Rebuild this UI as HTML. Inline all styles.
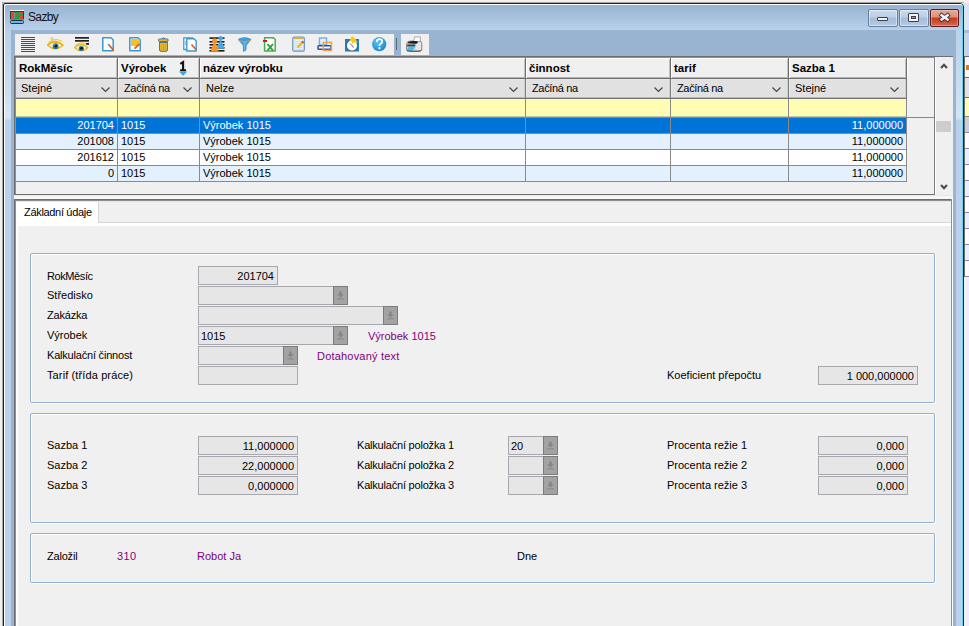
<!DOCTYPE html>
<html><head><meta charset="utf-8"><title>Sazby</title>
<style>
*{box-sizing:border-box;margin:0;padding:0}
html,body{width:969px;height:626px;overflow:hidden}
body{background:#f0f0f0;position:relative;font-family:"Liberation Sans",sans-serif;font-size:11px;color:#000}
.a{position:absolute}
.t{position:absolute;white-space:nowrap;line-height:13px;font-size:11px}
.b{font-weight:bold}
.r{text-align:right}
.p{color:#800080}
svg{position:absolute;overflow:visible}
</style></head><body>

<div class="a" style="left:2px;top:2px;width:962px;height:700px;border:1px solid #a8a8a8;border-right:none"></div>
<div class="a" style="left:3px;top:3px;width:961px;height:700px;border:1px solid #1e1e1e;border-radius:2px 4px 0 0;background:#b9d1ea"></div>
<div class="a" style="left:4px;top:4px;width:959px;height:700px;border-top:1px solid #fff;border-left:1px solid #fff;border-radius:3px 3px 0 0;border-right:1px solid #5fd4f5"></div>
<div class="a" style="left:5px;top:5px;width:957px;height:25px;background:linear-gradient(#98b3d0,#b9d1ea);border-radius:2px 2px 0 0"></div>
<div class="a" style="left:5px;top:30px;width:6px;height:91px;background:linear-gradient(#b9d1ea 0%,#c9dbee 55%,#d7e5f3 96%,#bad2ea 100%)"></div>
<div class="a" style="left:956px;top:30px;width:6px;height:91px;background:linear-gradient(#b9d1ea 0%,#c9dbee 55%,#d7e5f3 96%,#bad2ea 100%)"></div>
<div class="a" style="left:11px;top:30px;width:945px;height:700px;background:#99b4d1"></div>
<svg style="left:10px;top:10px" width="14" height="14" viewBox="0 0 14 14">
<rect x="0" y="0" width="14" height="1" fill="#f4f4f4"/>
<rect x="0.5" y="1.5" width="13" height="8" fill="#1ea050" stroke="#303a40"/>
<rect x="1" y="2" width="3" height="7" fill="#e04a26"/>
<rect x="4" y="3" width="1" height="5" fill="#8090a8"/>
<rect x="10" y="2" width="3" height="2" fill="#e04a26"/>
<rect x="10" y="6" width="3" height="3" fill="#e04a26"/>
<rect x="5" y="4" width="2" height="2" fill="#e04a26"/>
<rect x="0" y="9.5" width="14" height="1" fill="#c8d0d8"/>
<rect x="0.5" y="10.5" width="13" height="3" rx="1" fill="#62b8f4" stroke="#203040"/>
</svg>
<div class="t" style="left:28px;top:10px;font-size:12px;letter-spacing:-0.65px;color:#101018;line-height:15px">Sazby</div>
<div class="a" style="left:868px;top:9px;width:30px;height:18px;background:linear-gradient(#c9daee 0%,#b9cfe8 45%,#a3bcd9 50%,#b3cae4 100%);border:1px solid #6a7f9c;border-radius:2px;box-shadow:inset 0 0 0 1px rgba(255,255,255,0.45)"></div>
<div class="a" style="left:899px;top:9px;width:30px;height:18px;background:linear-gradient(#c9daee 0%,#b9cfe8 45%,#a3bcd9 50%,#b3cae4 100%);border:1px solid #6a7f9c;border-radius:2px;box-shadow:inset 0 0 0 1px rgba(255,255,255,0.45)"></div>
<div class="a" style="left:930px;top:9px;width:29px;height:18px;background:linear-gradient(#eba896 0%,#de9078 44%,#c23c1c 50%,#d26a50 100%);border:1px solid #5a1c1c;border-radius:2px;box-shadow:inset 0 0 0 1px rgba(255,200,190,0.45)"></div>
<div class="a" style="left:877px;top:17px;width:11px;height:4px;background:#f4f4f4;border:1px solid #3c3c4c;border-radius:1px"></div>
<div class="a" style="left:908px;top:13px;width:11px;height:9px;background:#f4f4f4;border:1px solid #3c3c4c;border-radius:1px"></div>
<div class="a" style="left:911px;top:16px;width:5px;height:3px;background:#8fa6c6;border:1px solid #3c3c4c"></div>
<svg style="left:937px;top:11px" width="15" height="13" viewBox="0 0 15 13">
<path d="M4.6 4.2 L10.6 8.6 M10.6 4.2 L4.6 8.6" stroke="#3a3040" stroke-width="4.2" stroke-linecap="square"/>
<path d="M4.6 4.2 L10.6 8.6 M10.6 4.2 L4.6 8.6" stroke="#f4f4f4" stroke-width="2.5" stroke-linecap="square"/>
</svg>
<div class="a" style="left:15px;top:34px;width:379px;height:21px;background:#f0f0f0"></div>
<div class="a" style="left:396px;top:38px;width:1px;height:12px;background:#5a6a7a"></div>
<div class="a" style="left:401px;top:34px;width:28px;height:21px;background:#f0f0f0"></div>
<svg style="left:0;top:0" width="440" height="60" viewBox="0 0 440 60">
<defs>
<linearGradient id="gfun" x1="0" y1="0" x2="1" y2="0"><stop offset="0" stop-color="#2a7cc4"/><stop offset="0.5" stop-color="#5ab8ee"/><stop offset="1" stop-color="#2a7cc4"/></linearGradient>
<radialGradient id="ghelp" cx="0.4" cy="0.35" r="0.7"><stop offset="0" stop-color="#5cc4f2"/><stop offset="1" stop-color="#1a86cc"/></radialGradient>
</defs>
<!-- 1 lines -->
<g fill="#4c4c4c">
<rect x="21" y="37" width="14" height="1"/><rect x="21" y="39" width="14" height="1"/><rect x="21" y="41" width="14" height="1"/><rect x="21" y="43" width="14" height="1"/>
<rect x="21" y="45" width="14" height="1"/><rect x="21" y="47" width="14" height="1"/><rect x="21" y="49" width="14" height="1"/><rect x="21" y="51" width="14" height="1"/>
</g>
<!-- 2 eye -->
<g fill="none" stroke-linecap="round">
<path d="M47.8 45.5 Q55 48.5 63 46" stroke="#f8f4e0" stroke-width="2.5"/>
<path d="M47.8 44.8 Q55 38.5 62.8 45.2" stroke="#e6b414" stroke-width="1.7"/>
<path d="M48.5 42.5 Q55 37.2 61.5 41" stroke="#ecc030" stroke-width="0.9"/>
<path d="M48 45.5 Q55 52 62.8 45.5" stroke="#e6b414" stroke-width="1.3"/>
<path d="M51.5 40 L51 37.8 M52.8 39.4 L52.8 37.5" stroke="#d8a818" stroke-width="0.6"/>
</g>
<circle cx="55.6" cy="46.2" r="2.9" fill="#26789c"/>
<circle cx="55.8" cy="46" r="1.3" fill="#050505"/>
<circle cx="54.8" cy="45" r="0.5" fill="#fff"/>
<!-- 3 eye with lines -->
<rect x="75" y="37" width="14" height="1.7" fill="#202020"/>
<rect x="75" y="40" width="14" height="1.7" fill="#202020"/>
<rect x="86" y="43" width="3" height="1.8" fill="#202020"/>
<g fill="none" stroke-linecap="round">
<path d="M75 48 Q81 50.5 87.5 48.3" stroke="#f8f4e0" stroke-width="2.2"/>
<path d="M74.8 47.5 Q81 41.5 87.5 47.5" stroke="#e6b414" stroke-width="1.6"/>
<path d="M75.5 45.2 Q81 41 86 44" stroke="#ecc030" stroke-width="0.9"/>
<path d="M75 48 Q81 53.5 87.5 48" stroke="#e6b414" stroke-width="1.2"/>
</g>
<circle cx="81.3" cy="48.5" r="2.6" fill="#26789c"/>
<circle cx="81.5" cy="48.3" r="1.2" fill="#050505"/>
<!-- 4 doc with pen -->
<path d="M102.8 37.8 H111 L113.2 40 V50.8 H102.8 Z" fill="#fff" stroke="#3d97d6" stroke-width="1.5" stroke-linejoin="round"/>
<path d="M108.5 44.5 L113.5 50.2" stroke="#e25a1c" stroke-width="1.8"/>
<path d="M108 44 L108.8 44.8" stroke="#888" stroke-width="1.2"/>
<!-- 5 doc yellow with pen -->
<path d="M129.8 37.8 H138 L140.2 40 V50.8 H129.8 Z" fill="#fff" stroke="#3d97d6" stroke-width="1.5" stroke-linejoin="round"/>
<path d="M131 39 H137.5 L139 40.5 V46 H131 Z" fill="#f8c21c"/>
<path d="M139.6 43.8 L134.5 48.6" stroke="#e25a1c" stroke-width="1.8"/>
<!-- 6 trash -->
<path d="M161.6 39.2 Q163.5 36.2 165.4 39.2" fill="#f2c01e" stroke="#4a6a98" stroke-width="0.8"/>
<rect x="158.4" y="38.9" width="9.8" height="2.5" rx="1.2" fill="#f2c01e" stroke="#4a6a98" stroke-width="0.9"/>
<rect x="159" y="41.4" width="8.8" height="1.3" fill="#4a6a98"/>
<path d="M159.6 42.6 H167.4 V50 Q167.4 51.3 166 51.3 H161 Q159.6 51.3 159.6 50 Z" fill="#f2c01e" stroke="#4a6a98" stroke-width="1"/>
<path d="M161.9 44 V50 M163.5 44 V50 M165.1 44 V50" stroke="#c89a14" stroke-width="0.8"/>
<!-- 7 two docs -->
<path d="M183.8 37.8 H192.5 V49.5 H183.8 Z" fill="#fff" stroke="#3d97d6" stroke-width="1.3"/>
<rect x="185" y="41" width="1" height="4" fill="#f5c020"/>
<path d="M186.8 38.8 H194 L196.2 41 V51 H186.8 Z" fill="#fff" stroke="#3d97d6" stroke-width="1.4" stroke-linejoin="round"/>
<path d="M191.5 44.5 L196.2 49.8" stroke="#e25a1c" stroke-width="1.7"/>
<!-- 8 lines with pawns -->
<g fill="#1a1a1a">
<rect x="209.5" y="37.3" width="15" height="1.6"/><rect x="209.5" y="41" width="15" height="1.6"/><rect x="209.5" y="44" width="15" height="1.6"/>
<rect x="209.5" y="47" width="15" height="1.6"/><rect x="209.5" y="50" width="15" height="1.6"/>
</g>
<path d="M217 48.5 C217 44 220 43 219.8 40.5 A2.3 2.3 0 1 1 221.5 40.5 C221.5 43 224 44 224 48.5 Z" fill="#4aa8e0"/>
<path d="M211 51.5 C211 46.5 213.5 45.5 213.3 43 A2.5 2.5 0 1 1 216 43 C216 45.5 218.5 46.5 218.5 51.5 Z" fill="#f7942a"/>
<!-- 9 funnel -->
<path d="M238.5 39.5 Q244.5 36 250.8 39.5 L246.2 45.5 L246 50 L243.5 51.5 L243.3 45.5 Z" fill="url(#gfun)" stroke="#2a6aa0" stroke-width="0.6"/>
<ellipse cx="244.6" cy="39.3" rx="6" ry="1.8" fill="#3a9ee0"/>
<path d="M238.6 40.6 Q244.6 43 250.6 40.6" fill="none" stroke="#d8a030" stroke-width="1.1"/>
<!-- 10 excel -->
<path d="M264.6 37.8 H273.5 L275.2 39.5 V51 H264.6 Z" fill="#fff" stroke="#4caa4c" stroke-width="1.5" stroke-linejoin="round"/>
<rect x="263" y="40" width="4" height="2" fill="#d01818"/>
<path d="M267.5 44 L273 50.5 M273 44 L267.5 50.5" stroke="#2a9a3a" stroke-width="1.9"/>
<!-- 11 notepad -->
<rect x="292.8" y="37" width="11.5" height="14.2" rx="1.5" fill="#e4f2fc" stroke="#6a90b8" stroke-width="1.2"/>
<rect x="294" y="37.5" width="9" height="1.6" fill="#c8b040"/>
<path d="M294.5 41.5 H302.5 M294.5 43.5 H302.5 M294.5 45.5 H302.5 M294.5 47.5 H302.5 M294.5 49.5 H302.5" stroke="#c0d8ee" stroke-width="0.7"/>
<path d="M303 41.8 L297.5 47.5" stroke="#f2b818" stroke-width="2.4"/>
<path d="M303.2 41.6 L302.3 42.5" stroke="#b82a2a" stroke-width="2.4"/>
<!-- 12 two windows -->
<rect x="319.5" y="38" width="7" height="7" fill="none" stroke="#66aef0" stroke-width="1.4"/>
<rect x="318" y="45.7" width="13" height="3.6" rx="0.8" fill="#fff" stroke="#2a4aa8" stroke-width="1.5"/>
<rect x="323.3" y="42.4" width="8.2" height="8" fill="none" stroke="#f0a050" stroke-width="1.5"/>
<!-- 13 clock -->
<rect x="345" y="39" width="14" height="12.5" fill="#1d7fc0"/>
<circle cx="352" cy="45.5" r="5.4" fill="#fff" stroke="#222" stroke-width="0.5"/>
<path d="M352 45.5 L350 43.5 M352 45.5 L353.5 47.5" stroke="#333" stroke-width="0.8"/>
<path d="M352 36 L349 41.5 L351.5 41 L352.5 44 L355 42 L358 43 L355.5 39 Z" fill="#f8c81c"/>
<!-- 14 help -->
<circle cx="379.2" cy="44.2" r="7.1" fill="url(#ghelp)"/>
<path d="M376.6 42 Q376.8 39.2 379.4 39.2 Q382.2 39.2 382.2 41.6 Q382.2 43.2 380.4 44 Q379.4 44.5 379.4 46" fill="none" stroke="#fff" stroke-width="1.8"/>
<rect x="378.4" y="47.2" width="2" height="2" fill="#fff"/>
<!-- printer -->
<path d="M406.5 44.5 Q406.5 41.8 409 41.2 L419 40.6 Q421.6 41 421.8 43.5 L421.8 49.5 Q421.6 51.3 419.5 51.3 L408.5 51.3 Q406.5 51.3 406.5 49.5 Z" fill="#d4d4d4" stroke="#707070" stroke-width="0.8"/>
<path d="M416 42 L421 42.5 L421 50.5 L416 50.5 Z" fill="#e6e6e6"/>
<path d="M413.5 41.5 L414.6 36.8 L420.6 37 L420 41.5 Z" fill="#fbfbfb" stroke="#8a8a9a" stroke-width="0.7"/>
<path d="M408 42.3 Q411 40.6 417.6 41.3 Q418.2 42.9 416.6 43.7 Q411 43.9 408 43.3 Z" fill="#1c1c1c"/>
<path d="M407.2 44.6 L415.5 44.6 L415 46.5 L407.2 46.5 Z" fill="#3a3a3a"/>
<path d="M406.9 49.6 L409.3 46.2 L415.2 46.5 L412.6 50.8 Z" fill="#36bdf0"/>
<path d="M407 50.6 L413 51.3 L420 51 L421.5 49.8" fill="none" stroke="#404048" stroke-width="0.9"/>
</svg>
<div class="a" style="left:14px;top:56px;width:939px;height:139px;background:#f0f0f0"></div>
<div class="a" style="left:14px;top:56px;width:939px;height:1px;background:#6e6e6e"></div>
<div class="a" style="left:14px;top:56px;width:1px;height:139px;background:#6e6e6e"></div>
<div class="a" style="left:15px;top:57px;width:920px;height:1px;background:#8e8e8e"></div>
<div class="a" style="left:15px;top:57px;width:1px;height:137px;background:#8e8e8e"></div>
<div class="a" style="left:14px;top:194px;width:921px;height:1px;background:#6e6e6e"></div>
<div class="a" style="left:934px;top:57px;width:1px;height:138px;background:#7a7f86"></div>
<div class="a" style="left:16px;top:58px;width:891px;height:1px;background:#fff"></div>
<div class="a" style="left:16px;top:59px;width:891px;height:18px;background:#f0f0f0"></div>
<div class="a" style="left:16px;top:77px;width:891px;height:1px;background:#b4b4b4"></div>
<div class="a" style="left:16px;top:78px;width:891px;height:1px;background:#6e6e6e"></div>
<div class="a" style="left:16px;top:79px;width:891px;height:18px;background:#e1e1e1"></div>
<div class="a" style="left:16px;top:79px;width:891px;height:1px;background:#e8e8e8"></div>
<div class="a" style="left:16px;top:97px;width:891px;height:1px;background:#b8b8b8"></div>
<div class="a" style="left:16px;top:98px;width:891px;height:1px;background:#747474"></div>
<div class="a" style="left:16px;top:99px;width:891px;height:18px;background:#fffdb4"></div>
<div class="a" style="left:16px;top:116px;width:891px;height:1px;background:#c8c6a0"></div>
<div class="a" style="left:16px;top:117px;width:918px;height:1px;background:#888888"></div>
<div class="a" style="left:16px;top:118px;width:891px;height:15px;background:#0074d6"></div>
<div class="a" style="left:16px;top:133px;width:891px;height:1px;background:#8a8a8a"></div>
<div class="a" style="left:16px;top:134px;width:891px;height:15px;background:#e2f1fd"></div>
<div class="a" style="left:16px;top:149px;width:891px;height:1px;background:#8a8a8a"></div>
<div class="a" style="left:16px;top:150px;width:891px;height:15px;background:#ffffff"></div>
<div class="a" style="left:16px;top:165px;width:891px;height:1px;background:#8a8a8a"></div>
<div class="a" style="left:16px;top:166px;width:891px;height:15px;background:#e2f1fd"></div>
<div class="a" style="left:16px;top:181px;width:891px;height:1px;background:#8a8a8a"></div>
<div class="a" style="left:116px;top:59px;width:1px;height:18px;background:#c2c2c2"></div>
<div class="a" style="left:117px;top:58px;width:1px;height:20px;background:#6e6e6e"></div>
<div class="a" style="left:118px;top:58px;width:1px;height:20px;background:#fff"></div>
<div class="a" style="left:116px;top:79px;width:1px;height:18px;background:#d0d0d0"></div>
<div class="a" style="left:117px;top:79px;width:1px;height:19px;background:#7a7a7a"></div>
<div class="a" style="left:118px;top:79px;width:1px;height:18px;background:#ebebeb"></div>
<div class="a" style="left:117px;top:99px;width:1px;height:83px;background:#8a8a8a"></div>
<div class="a" style="left:198px;top:59px;width:1px;height:18px;background:#c2c2c2"></div>
<div class="a" style="left:199px;top:58px;width:1px;height:20px;background:#6e6e6e"></div>
<div class="a" style="left:200px;top:58px;width:1px;height:20px;background:#fff"></div>
<div class="a" style="left:198px;top:79px;width:1px;height:18px;background:#d0d0d0"></div>
<div class="a" style="left:199px;top:79px;width:1px;height:19px;background:#7a7a7a"></div>
<div class="a" style="left:200px;top:79px;width:1px;height:18px;background:#ebebeb"></div>
<div class="a" style="left:199px;top:99px;width:1px;height:83px;background:#8a8a8a"></div>
<div class="a" style="left:524px;top:59px;width:1px;height:18px;background:#c2c2c2"></div>
<div class="a" style="left:525px;top:58px;width:1px;height:20px;background:#6e6e6e"></div>
<div class="a" style="left:526px;top:58px;width:1px;height:20px;background:#fff"></div>
<div class="a" style="left:524px;top:79px;width:1px;height:18px;background:#d0d0d0"></div>
<div class="a" style="left:525px;top:79px;width:1px;height:19px;background:#7a7a7a"></div>
<div class="a" style="left:526px;top:79px;width:1px;height:18px;background:#ebebeb"></div>
<div class="a" style="left:525px;top:99px;width:1px;height:83px;background:#8a8a8a"></div>
<div class="a" style="left:669px;top:59px;width:1px;height:18px;background:#c2c2c2"></div>
<div class="a" style="left:670px;top:58px;width:1px;height:20px;background:#6e6e6e"></div>
<div class="a" style="left:671px;top:58px;width:1px;height:20px;background:#fff"></div>
<div class="a" style="left:669px;top:79px;width:1px;height:18px;background:#d0d0d0"></div>
<div class="a" style="left:670px;top:79px;width:1px;height:19px;background:#7a7a7a"></div>
<div class="a" style="left:671px;top:79px;width:1px;height:18px;background:#ebebeb"></div>
<div class="a" style="left:670px;top:99px;width:1px;height:83px;background:#8a8a8a"></div>
<div class="a" style="left:787px;top:59px;width:1px;height:18px;background:#c2c2c2"></div>
<div class="a" style="left:788px;top:58px;width:1px;height:20px;background:#6e6e6e"></div>
<div class="a" style="left:789px;top:58px;width:1px;height:20px;background:#fff"></div>
<div class="a" style="left:787px;top:79px;width:1px;height:18px;background:#d0d0d0"></div>
<div class="a" style="left:788px;top:79px;width:1px;height:19px;background:#7a7a7a"></div>
<div class="a" style="left:789px;top:79px;width:1px;height:18px;background:#ebebeb"></div>
<div class="a" style="left:788px;top:99px;width:1px;height:83px;background:#8a8a8a"></div>
<div class="a" style="left:905px;top:59px;width:1px;height:18px;background:#c2c2c2"></div>
<div class="a" style="left:906px;top:58px;width:1px;height:20px;background:#6e6e6e"></div>
<div class="a" style="left:907px;top:58px;width:1px;height:20px;background:#fff"></div>
<div class="a" style="left:905px;top:79px;width:1px;height:18px;background:#d0d0d0"></div>
<div class="a" style="left:906px;top:79px;width:1px;height:19px;background:#7a7a7a"></div>
<div class="a" style="left:907px;top:79px;width:1px;height:18px;background:#ebebeb"></div>
<div class="a" style="left:906px;top:99px;width:1px;height:83px;background:#8a8a8a"></div>
<div class="t" style="left:19px;top:62px;font-weight:bold;font-size:11.5px">RokMěsíc</div>
<div class="t" style="left:121px;top:62px;font-weight:bold;font-size:11.5px">Výrobek</div>
<div class="t" style="left:203px;top:62px;font-weight:bold;font-size:11.5px">název výrobku</div>
<div class="t" style="left:529px;top:62px;font-weight:bold;font-size:11.5px">činnost</div>
<div class="t" style="left:674px;top:62px;font-weight:bold;font-size:11.5px">tarif</div>
<div class="t" style="left:792px;top:62px;font-weight:bold;font-size:11.5px">Sazba 1</div>
<svg style="left:178px;top:61px" width="10" height="17" viewBox="0 0 10 17">
<path d="M2.3 2.9 L5.1 1.2 L5.1 9.2 M2.2 9.2 L8 9.2" stroke="#111" stroke-width="2.1" fill="none"/>
<path d="M0.8 10.6 L9.4 10.6 L5.1 14.8 Z" fill="#34a8e8"/>
</svg>
<div class="t" style="left:21px;top:82px;letter-spacing:0px">Stejné</div>
<svg style="left:101px;top:87px" width="9" height="6" viewBox="0 0 9 6"><path d="M0.5 0.5 L4.5 4.5 L8.5 0.5" stroke="#444" stroke-width="1.2" fill="none"/></svg>
<div class="t" style="left:124px;top:82px;letter-spacing:-0.35px">Začíná na</div>
<svg style="left:183px;top:87px" width="9" height="6" viewBox="0 0 9 6"><path d="M0.5 0.5 L4.5 4.5 L8.5 0.5" stroke="#444" stroke-width="1.2" fill="none"/></svg>
<div class="t" style="left:206px;top:82px;letter-spacing:0px">Nelze</div>
<svg style="left:509px;top:87px" width="9" height="6" viewBox="0 0 9 6"><path d="M0.5 0.5 L4.5 4.5 L8.5 0.5" stroke="#444" stroke-width="1.2" fill="none"/></svg>
<div class="t" style="left:532px;top:82px;letter-spacing:-0.35px">Začíná na</div>
<svg style="left:654px;top:87px" width="9" height="6" viewBox="0 0 9 6"><path d="M0.5 0.5 L4.5 4.5 L8.5 0.5" stroke="#444" stroke-width="1.2" fill="none"/></svg>
<div class="t" style="left:677px;top:82px;letter-spacing:-0.35px">Začíná na</div>
<svg style="left:772px;top:87px" width="9" height="6" viewBox="0 0 9 6"><path d="M0.5 0.5 L4.5 4.5 L8.5 0.5" stroke="#444" stroke-width="1.2" fill="none"/></svg>
<div class="t" style="left:795px;top:82px;letter-spacing:0px">Stejné</div>
<svg style="left:890px;top:87px" width="9" height="6" viewBox="0 0 9 6"><path d="M0.5 0.5 L4.5 4.5 L8.5 0.5" stroke="#444" stroke-width="1.2" fill="none"/></svg>
<div class="t" style="left:15px;top:119px;width:99px;text-align:right;color:#fff">201704</div>
<div class="t" style="left:121px;top:119px;color:#fff">1015</div>
<div class="t" style="left:203px;top:119px;color:#fff">Výrobek 1015</div>
<div class="t" style="left:789px;top:119px;width:114px;text-align:right;color:#fff">11,000000</div>
<div class="t" style="left:15px;top:135px;width:99px;text-align:right;color:#000">201008</div>
<div class="t" style="left:121px;top:135px;color:#000">1015</div>
<div class="t" style="left:203px;top:135px;color:#000">Výrobek 1015</div>
<div class="t" style="left:789px;top:135px;width:114px;text-align:right;color:#000">11,000000</div>
<div class="t" style="left:15px;top:151px;width:99px;text-align:right;color:#000">201612</div>
<div class="t" style="left:121px;top:151px;color:#000">1015</div>
<div class="t" style="left:203px;top:151px;color:#000">Výrobek 1015</div>
<div class="t" style="left:789px;top:151px;width:114px;text-align:right;color:#000">11,000000</div>
<div class="t" style="left:15px;top:167px;width:99px;text-align:right;color:#000">0</div>
<div class="t" style="left:121px;top:167px;color:#000">1015</div>
<div class="t" style="left:203px;top:167px;color:#000">Výrobek 1015</div>
<div class="t" style="left:789px;top:167px;width:114px;text-align:right;color:#000">11,000000</div>
<div class="a" style="left:935px;top:57px;width:18px;height:137px;background:#f0f0f0;border-left:1px solid #fff"></div>
<div class="a" style="left:936px;top:121px;width:15px;height:11px;background:#cdcdcd"></div>
<svg style="left:939.5px;top:63px" width="8" height="6" viewBox="0 0 8 6"><path d="M1 5 L4 1.8 L7 5" stroke="#4a4a4a" stroke-width="2.1" fill="none"/></svg>
<svg style="left:939.5px;top:184px" width="8" height="6" viewBox="0 0 8 6"><path d="M1 1 L4 4.2 L7 1" stroke="#4a4a4a" stroke-width="2.1" fill="none"/></svg>
<div class="a" style="left:14px;top:195px;width:939px;height:4px;background:#f6f6f6"></div>
<div class="a" style="left:14px;top:195px;width:939px;height:1px;background:#e8e8e8"></div>
<div class="a" style="left:14px;top:199px;width:938px;height:427px;background:#f0f0f0"></div>
<div class="a" style="left:14px;top:199px;width:938px;height:1px;background:#6e6e6e"></div>
<div class="a" style="left:14px;top:199px;width:1px;height:427px;background:#6e6e6e"></div>
<div class="a" style="left:15px;top:200px;width:937px;height:1px;background:#8e8e8e"></div>
<div class="a" style="left:15px;top:200px;width:1px;height:426px;background:#8e8e8e"></div>
<div class="a" style="left:951px;top:199px;width:1px;height:427px;background:#8a8f98"></div>
<div class="a" style="left:952px;top:199px;width:1px;height:427px;background:#fff"></div>
<div class="a" style="left:16px;top:201px;width:935px;height:1px;background:#e6e6e6"></div>
<div class="a" style="left:16px;top:202px;width:82px;height:21px;background:#fff"></div>
<div class="a" style="left:98px;top:202px;width:1px;height:21px;background:#d6d6d6"></div>
<div class="a" style="left:98px;top:222px;width:853px;height:1px;background:#d6d6d6"></div>
<div class="t" style="left:24px;top:206px;letter-spacing:-0.32px">Základní údaje</div>
<div class="a" style="left:16px;top:223px;width:935px;height:3px;background:#fff"></div>
<div class="a" style="left:16px;top:223px;width:2px;height:403px;background:#fff"></div>
<div class="a" style="left:31px;top:254px;width:905px;height:150px;border:1px solid #fff;border-radius:2px"></div>
<div class="a" style="left:30px;top:253px;width:905px;height:150px;border:1px solid #92b0d0;border-radius:2px"></div>
<div class="a" style="left:31px;top:414px;width:905px;height:110px;border:1px solid #fff;border-radius:2px"></div>
<div class="a" style="left:30px;top:413px;width:905px;height:110px;border:1px solid #92b0d0;border-radius:2px"></div>
<div class="a" style="left:31px;top:534px;width:905px;height:50px;border:1px solid #fff;border-radius:2px"></div>
<div class="a" style="left:30px;top:533px;width:905px;height:50px;border:1px solid #92b0d0;border-radius:2px"></div>
<div class="t" style="left:47px;top:270px;letter-spacing:-0.4px;">RokMěsíc</div>
<div class="t" style="left:47px;top:289px;letter-spacing:0px;">Středisko</div>
<div class="t" style="left:47px;top:309px;letter-spacing:-0.2px;">Zakázka</div>
<div class="t" style="left:47px;top:329px;letter-spacing:0px;">Výrobek</div>
<div class="t" style="left:47px;top:349px;letter-spacing:-0.2px;">Kalkulační činnost</div>
<div class="t" style="left:47px;top:369px;letter-spacing:0.12px;">Tarif (třída práce)</div>
<div class="a" style="left:198px;top:266px;width:80px;height:19px;background:#e6e6e6;border:1px solid #a7a7ad"></div>
<div class="t" style="left:198px;top:270px;width:76px;text-align:right">201704</div>
<div class="a" style="left:198px;top:286px;width:150px;height:19px;background:#e6e6e6;border:1px solid #a7a7ad"></div>
<div class="a" style="left:333px;top:286px;width:15px;height:19px;background:#a3a3a3;border:1px solid #7c7c7c"></div>
<svg style="left:337px;top:291px" width="7" height="9" viewBox="0 0 7 9"><path d="M2.3 0.6 H4.7 V3.2 H6.8 L3.5 6.4 L0.2 3.2 H2.3 Z" fill="#858585"/><rect x="0.3" y="7.3" width="6.4" height="1.1" fill="#858585"/></svg>
<div class="a" style="left:198px;top:306px;width:200px;height:19px;background:#e6e6e6;border:1px solid #a7a7ad"></div>
<div class="a" style="left:383px;top:306px;width:15px;height:19px;background:#a3a3a3;border:1px solid #7c7c7c"></div>
<svg style="left:387px;top:311px" width="7" height="9" viewBox="0 0 7 9"><path d="M2.3 0.6 H4.7 V3.2 H6.8 L3.5 6.4 L0.2 3.2 H2.3 Z" fill="#858585"/><rect x="0.3" y="7.3" width="6.4" height="1.1" fill="#858585"/></svg>
<div class="a" style="left:198px;top:326px;width:150px;height:19px;background:#e6e6e6;border:1px solid #a7a7ad"></div>
<div class="a" style="left:333px;top:326px;width:15px;height:19px;background:#a3a3a3;border:1px solid #7c7c7c"></div>
<svg style="left:337px;top:331px" width="7" height="9" viewBox="0 0 7 9"><path d="M2.3 0.6 H4.7 V3.2 H6.8 L3.5 6.4 L0.2 3.2 H2.3 Z" fill="#858585"/><rect x="0.3" y="7.3" width="6.4" height="1.1" fill="#858585"/></svg>
<div class="t" style="left:201px;top:330px;">1015</div>
<div class="a" style="left:198px;top:346px;width:100px;height:19px;background:#e6e6e6;border:1px solid #a7a7ad"></div>
<div class="a" style="left:283px;top:346px;width:15px;height:19px;background:#a3a3a3;border:1px solid #7c7c7c"></div>
<svg style="left:287px;top:351px" width="7" height="9" viewBox="0 0 7 9"><path d="M2.3 0.6 H4.7 V3.2 H6.8 L3.5 6.4 L0.2 3.2 H2.3 Z" fill="#858585"/><rect x="0.3" y="7.3" width="6.4" height="1.1" fill="#858585"/></svg>
<div class="a" style="left:198px;top:366px;width:100px;height:19px;background:#e6e6e6;border:1px solid #a7a7ad"></div>
<div class="t" style="left:368px;top:330px;letter-spacing:0px;color:#800080">Výrobek 1015</div>
<div class="t" style="left:317px;top:350px;letter-spacing:0.2px;color:#800080">Dotahovaný text</div>
<div class="t" style="left:667px;top:369px;letter-spacing:0px;">Koeficient přepočtu</div>
<div class="a" style="left:818px;top:366px;width:100px;height:19px;background:#e6e6e6;border:1px solid #a7a7ad"></div>
<div class="t" style="left:818px;top:370px;width:96px;text-align:right">1 000,000000</div>
<div class="t" style="left:47px;top:439px;letter-spacing:0px;">Sazba 1</div>
<div class="a" style="left:198px;top:436px;width:100px;height:19px;background:#e6e6e6;border:1px solid #a7a7ad"></div>
<div class="t" style="left:198px;top:440px;width:96px;text-align:right">11,000000</div>
<div class="t" style="left:357px;top:439px;letter-spacing:-0.2px;">Kalkulační položka 1</div>
<div class="a" style="left:508px;top:436px;width:50px;height:19px;background:#e6e6e6;border:1px solid #a7a7ad"></div>
<div class="a" style="left:543px;top:436px;width:15px;height:19px;background:#a3a3a3;border:1px solid #7c7c7c"></div>
<svg style="left:547px;top:441px" width="7" height="9" viewBox="0 0 7 9"><path d="M2.3 0.6 H4.7 V3.2 H6.8 L3.5 6.4 L0.2 3.2 H2.3 Z" fill="#858585"/><rect x="0.3" y="7.3" width="6.4" height="1.1" fill="#858585"/></svg>
<div class="t" style="left:511px;top:440px;">20</div>
<div class="t" style="left:667px;top:439px;letter-spacing:0px;">Procenta režie 1</div>
<div class="a" style="left:818px;top:436px;width:90px;height:19px;background:#e6e6e6;border:1px solid #a7a7ad"></div>
<div class="t" style="left:818px;top:440px;width:86px;text-align:right">0,000</div>
<div class="t" style="left:47px;top:459px;letter-spacing:0px;">Sazba 2</div>
<div class="a" style="left:198px;top:456px;width:100px;height:19px;background:#e6e6e6;border:1px solid #a7a7ad"></div>
<div class="t" style="left:198px;top:460px;width:96px;text-align:right">22,000000</div>
<div class="t" style="left:357px;top:459px;letter-spacing:-0.2px;">Kalkulační položka 2</div>
<div class="a" style="left:508px;top:456px;width:50px;height:19px;background:#e6e6e6;border:1px solid #a7a7ad"></div>
<div class="a" style="left:543px;top:456px;width:15px;height:19px;background:#a3a3a3;border:1px solid #7c7c7c"></div>
<svg style="left:547px;top:461px" width="7" height="9" viewBox="0 0 7 9"><path d="M2.3 0.6 H4.7 V3.2 H6.8 L3.5 6.4 L0.2 3.2 H2.3 Z" fill="#858585"/><rect x="0.3" y="7.3" width="6.4" height="1.1" fill="#858585"/></svg>
<div class="t" style="left:667px;top:459px;letter-spacing:0px;">Procenta režie 2</div>
<div class="a" style="left:818px;top:456px;width:90px;height:19px;background:#e6e6e6;border:1px solid #a7a7ad"></div>
<div class="t" style="left:818px;top:460px;width:86px;text-align:right">0,000</div>
<div class="t" style="left:47px;top:479px;letter-spacing:0px;">Sazba 3</div>
<div class="a" style="left:198px;top:476px;width:100px;height:19px;background:#e6e6e6;border:1px solid #a7a7ad"></div>
<div class="t" style="left:198px;top:480px;width:96px;text-align:right">0,000000</div>
<div class="t" style="left:357px;top:479px;letter-spacing:-0.2px;">Kalkulační položka 3</div>
<div class="a" style="left:508px;top:476px;width:50px;height:19px;background:#e6e6e6;border:1px solid #a7a7ad"></div>
<div class="a" style="left:543px;top:476px;width:15px;height:19px;background:#a3a3a3;border:1px solid #7c7c7c"></div>
<svg style="left:547px;top:481px" width="7" height="9" viewBox="0 0 7 9"><path d="M2.3 0.6 H4.7 V3.2 H6.8 L3.5 6.4 L0.2 3.2 H2.3 Z" fill="#858585"/><rect x="0.3" y="7.3" width="6.4" height="1.1" fill="#858585"/></svg>
<div class="t" style="left:667px;top:479px;letter-spacing:0px;">Procenta režie 3</div>
<div class="a" style="left:818px;top:476px;width:90px;height:19px;background:#e6e6e6;border:1px solid #a7a7ad"></div>
<div class="t" style="left:818px;top:480px;width:86px;text-align:right">0,000</div>
<div class="t" style="left:47px;top:550px;letter-spacing:-0.2px;">Založil</div>
<div class="t" style="left:117px;top:550px;letter-spacing:0.4px;color:#800080">310</div>
<div class="t" style="left:197px;top:550px;letter-spacing:0px;color:#800080">Robot Ja</div>
<div class="t" style="left:517px;top:550px;letter-spacing:0px;">Dne</div>
<div class="a" style="left:964px;top:0px;width:5px;height:626px;background:#f0f0f0"></div>
<div class="a" style="left:964px;top:3px;width:5px;height:27px;background:#d9e4ef"></div>
<div class="a" style="left:964px;top:30px;width:5px;height:3px;background:#a9bdd4"></div>
<div class="a" style="left:964px;top:33px;width:5px;height:23px;background:#c6d5e4"></div>
<div class="a" style="left:964px;top:56px;width:5px;height:221px;background:#f0f0f0"></div>
<div class="a" style="left:964px;top:56px;width:5px;height:1px;background:#6e6e6e"></div>
<div class="a" style="left:965px;top:57px;width:4px;height:20px;background:#f8f8f8"></div>
<div class="a" style="left:966px;top:65px;width:3px;height:5px;background:#e07818"></div>
<div class="a" style="left:964px;top:77px;width:5px;height:1px;background:#6e6e6e"></div>
<div class="a" style="left:965px;top:78px;width:4px;height:19px;background:#e1e1e1"></div>
<div class="a" style="left:964px;top:97px;width:5px;height:1px;background:#6e6e6e"></div>
<div class="a" style="left:965px;top:98px;width:4px;height:18px;background:#fffdb4"></div>
<div class="a" style="left:964px;top:116px;width:5px;height:1px;background:#888"></div>
<div class="a" style="left:965px;top:117px;width:4px;height:15px;background:#c4d0dc"></div>
<div class="a" style="left:964px;top:132px;width:5px;height:1px;background:#8a8a8a"></div>
<div class="a" style="left:965px;top:133px;width:4px;height:15px;background:#ffffff"></div>
<div class="a" style="left:964px;top:148px;width:5px;height:1px;background:#8a8a8a"></div>
<div class="a" style="left:965px;top:149px;width:4px;height:15px;background:#e2f1fd"></div>
<div class="a" style="left:964px;top:164px;width:5px;height:1px;background:#8a8a8a"></div>
<div class="a" style="left:965px;top:165px;width:4px;height:15px;background:#ffffff"></div>
<div class="a" style="left:964px;top:180px;width:5px;height:1px;background:#8a8a8a"></div>
<div class="a" style="left:965px;top:181px;width:4px;height:15px;background:#e2f1fd"></div>
<div class="a" style="left:964px;top:196px;width:5px;height:1px;background:#8a8a8a"></div>
<div class="a" style="left:965px;top:197px;width:4px;height:15px;background:#ffffff"></div>
<div class="a" style="left:964px;top:212px;width:5px;height:1px;background:#8a8a8a"></div>
<div class="a" style="left:965px;top:213px;width:4px;height:15px;background:#e2f1fd"></div>
<div class="a" style="left:964px;top:228px;width:5px;height:1px;background:#8a8a8a"></div>
<div class="a" style="left:965px;top:229px;width:4px;height:15px;background:#ffffff"></div>
<div class="a" style="left:964px;top:244px;width:5px;height:1px;background:#8a8a8a"></div>
<div class="a" style="left:965px;top:245px;width:4px;height:15px;background:#e2f1fd"></div>
<div class="a" style="left:964px;top:260px;width:5px;height:1px;background:#8a8a8a"></div>
<div class="a" style="left:965px;top:261px;width:4px;height:15px;background:#ffffff"></div>
<div class="a" style="left:964px;top:276px;width:5px;height:1px;background:#8a8a8a"></div>
<div class="a" style="left:964px;top:56px;width:1px;height:221px;background:#6e6e6e"></div>
</body></html>
